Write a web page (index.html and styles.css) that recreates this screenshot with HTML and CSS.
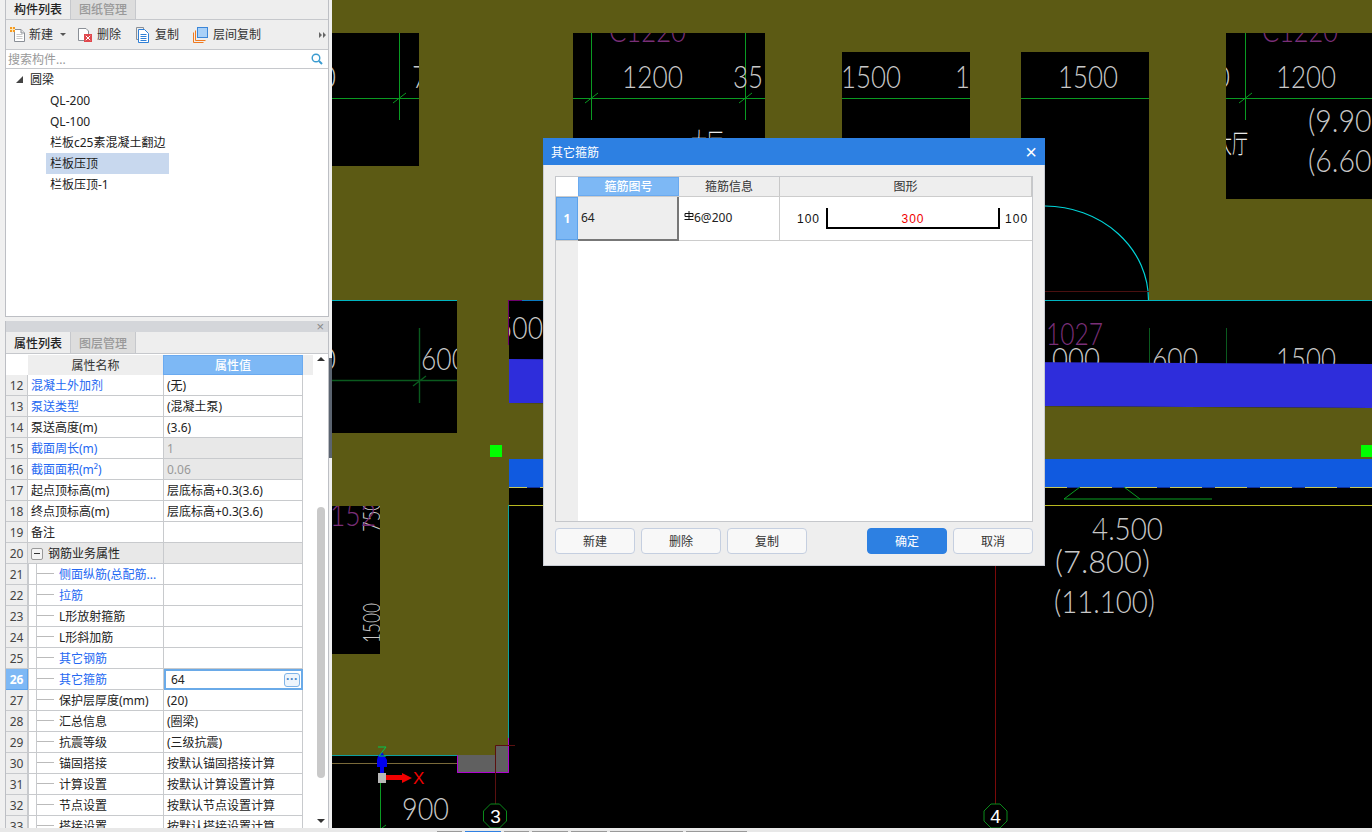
FILE: index.html
```html
<!DOCTYPE html>
<html lang="zh-CN">
<head>
<meta charset="utf-8">
<title>其它箍筋</title>
<link rel="stylesheet" href="styles.css">
</head>
<body>
<div class="app">
  <div class="main">
    <aside class="side">
      <section class="panel panel-top">
        <div class="tabs tabs-top">
          <div class="tab active">构件列表</div>
          <div class="tab">图纸管理</div>
        </div>
        <div class="toolbar">
          <svg class="ic" viewBox="0 0 16 16"><path d="M4.5 2.5H11L14.5 6V14.5H4.5Z" fill="#fff" stroke="#8a8f96"/><path d="M11 2.5V6H14.5" fill="#e6e6e6" stroke="#8a8f96"/><path d="M6.5 7.5H12.5M6.5 9.5H12.5M6.5 11.5H12.5" stroke="#c9c9c9"/><rect x="0" y="0" width="5" height="5" fill="#f59a23"/><path d="M0 2.5H5M2.5 0V5" stroke="#ffe6b0"/></svg>
          <span class="tool-label">新建</span>
          <svg class="caret" viewBox="0 0 6 3"><path d="M0 0H6L3 3Z" fill="#555"/></svg>
          <svg class="ic ic-del" viewBox="0 0 16 16"><path d="M1.5 1.5H9L11.5 4V13.5H1.5Z" fill="#fff" stroke="#8a8f96"/><rect x="7" y="7" width="8" height="8" fill="#e0474c"/><path d="M8.8 8.8L13.2 13.2M13.2 8.8L8.8 13.2" stroke="#fff"/></svg>
          <span class="tool-label">删除</span>
          <svg class="ic ic-copy" viewBox="0 0 16 16"><path d="M1.5 0.5H8.5V2.5" fill="none" stroke="#8a8f96"/><path d="M1.5 .5V12.5H3" fill="none" stroke="#8a8f96"/><path d="M3.5 2.5H9.5L13.5 6.5V15.5H3.5Z" fill="#fff" stroke="#2f7fd6"/><path d="M5.5 7.5H11.5M5.5 9.5H11.5M5.5 11.5H11.5M5.5 13.5H11.5" stroke="#2f7fd6"/></svg>
          <span class="tool-label">复制</span>
          <svg class="ic ic-floor" viewBox="0 0 16 16"><path d="M.5 15.5V5.5M.5 15.5H10.5M2.5 13.5V3.5M2.5 13.5H12.5" fill="none" stroke="#f07a1f"/><rect x="4.5" y=".5" width="10" height="10" fill="#a9d0f7" stroke="#3b86d8"/></svg>
          <span class="tool-label">层间复制</span>
          <svg class="more" viewBox="0 0 8 6"><path d="M0 0L3 3L0 6ZM4 0L7 3L4 6Z" fill="#666"/></svg>
        </div>
        <div class="search">
          <span class="search-text">搜索构件...</span>
          <svg class="search-ic" viewBox="0 0 12 12"><circle cx="5" cy="5" r="3.8" fill="none" stroke="#3a9bd0" stroke-width="1.4"/><path d="M8 8L11 11" stroke="#3a9bd0" stroke-width="2"/></svg>
        </div>
        <div class="tree">
          <div class="tree-root"><svg class="tree-caret" viewBox="0 0 7 7"><path d="M0 7L7 0V7Z" fill="#444"/></svg>圆梁</div>
          <div class="tree-item">QL-200</div>
          <div class="tree-item">QL-100</div>
          <div class="tree-item">栏板c25素混凝土翻边</div>
          <div class="tree-item selected">栏板压顶</div>
          <div class="tree-item">栏板压顶-1</div>
        </div>
      </section>

      <section class="panel panel-bottom">
        <div class="strip"><span class="strip-x">×</span></div>
        <div class="tabs">
          <div class="tab active">属性列表</div>
          <div class="tab">图层管理</div>
        </div>
        <div class="props">
          <div class="sheet">
            <div class="head">
              <div class="head-corner"></div>
              <div class="head-name">属性名称</div>
              <div class="head-val">属性值</div>
              <div class="head-rest"></div>
            </div>
            <div class="row"><div class="num">12</div><div class="name link">混凝土外加剂</div><div class="val">(无)</div></div>
            <div class="row"><div class="num">13</div><div class="name link">泵送类型</div><div class="val">(混凝土泵)</div></div>
            <div class="row"><div class="num">14</div><div class="name">泵送高度(m)</div><div class="val">(3.6)</div></div>
            <div class="row"><div class="num">15</div><div class="name link">截面周长(m)</div><div class="val off">1</div></div>
            <div class="row"><div class="num">16</div><div class="name link">截面面积(m²)</div><div class="val off">0.06</div></div>
            <div class="row"><div class="num">17</div><div class="name">起点顶标高(m)</div><div class="val">层底标高+0.3(3.6)</div></div>
            <div class="row"><div class="num">18</div><div class="name">终点顶标高(m)</div><div class="val">层底标高+0.3(3.6)</div></div>
            <div class="row"><div class="num">19</div><div class="name">备注</div><div class="val"></div></div>
            <div class="row"><div class="num">20</div><div class="name group"><span class="minus"></span>钢筋业务属性</div><div class="val off"></div></div>
            <div class="row"><div class="num">21</div><div class="name child link"><i class="branch"></i>侧面纵筋(总配筋...</div><div class="val"></div></div>
            <div class="row"><div class="num">22</div><div class="name child link"><i class="branch"></i>拉筋</div><div class="val"></div></div>
            <div class="row"><div class="num">23</div><div class="name child"><i class="branch"></i>L形放射箍筋</div><div class="val"></div></div>
            <div class="row"><div class="num">24</div><div class="name child"><i class="branch"></i>L形斜加筋</div><div class="val"></div></div>
            <div class="row"><div class="num">25</div><div class="name child link"><i class="branch"></i>其它钢筋</div><div class="val"></div></div>
            <div class="row"><div class="num current">26</div><div class="name child link"><i class="branch"></i>其它箍筋</div><div class="val editing"><span>64</span><span class="dots">···</span></div></div>
            <div class="row"><div class="num">27</div><div class="name child"><i class="branch"></i>保护层厚度(mm)</div><div class="val">(20)</div></div>
            <div class="row"><div class="num">28</div><div class="name child"><i class="branch"></i>汇总信息</div><div class="val">(圈梁)</div></div>
            <div class="row"><div class="num">29</div><div class="name child"><i class="branch"></i>抗震等级</div><div class="val">(三级抗震)</div></div>
            <div class="row"><div class="num">30</div><div class="name child"><i class="branch"></i>锚固搭接</div><div class="val">按默认锚固搭接计算</div></div>
            <div class="row"><div class="num">31</div><div class="name child"><i class="branch"></i>计算设置</div><div class="val">按默认计算设置计算</div></div>
            <div class="row"><div class="num">32</div><div class="name child"><i class="branch"></i>节点设置</div><div class="val">按默认节点设置计算</div></div>
            <div class="row"><div class="num">33</div><div class="name child"><i class="branch"></i>搭接设置</div><div class="val">按默认搭接设置计算</div></div>
          </div>
          <div class="scroll">
            <svg class="arrow" viewBox="0 0 8 4"><path d="M0 4L4 0L8 4Z" fill="#333"/></svg>
            <div class="thumb"></div>
            <svg class="arrow arrow-down" viewBox="0 0 8 4"><path d="M0 0L4 4L8 0Z" fill="#333"/></svg>
          </div>
        </div>
      </section>
      <div class="splitter"></div>
    </aside>

    <div class="canvas">
      <svg class="cad" viewBox="332 0 1040 828" width="1040" height="828">
        <!-- lines and dimensions under the slabs -->
        <g stroke="#0a9a22" fill="none">
          <path d="M332 98.5H1372"/>
          <path d="M399.5 33V120M591.5 33V120M745.5 33V120M1245.5 33V120"/>
          <path d="M393 103L406 93M585 103L598 93M739 103L752 93M1239 103L1252 93"/>
        </g>
        <g stroke="#0a5a1e" fill="none">
          <path d="M332 380.5H457M419.5 328V403M413 386L426 376" stroke-width="1.4"/>
          <path d="M1149.5 328V364M1226.5 328V364"/>
        </g>
        <g class="dim">
          <text x="320" y="88" textLength="16" lengthAdjust="spacingAndGlyphs">0</text>
          <text x="412" y="88" textLength="16" lengthAdjust="spacingAndGlyphs">7</text>
          <text x="622" y="88" textLength="61" lengthAdjust="spacingAndGlyphs">1200</text>
          <text x="733" y="88" textLength="30" lengthAdjust="spacingAndGlyphs">35</text>
          <text x="841" y="88" textLength="60" lengthAdjust="spacingAndGlyphs">1500</text>
          <text x="955" y="88" textLength="30" lengthAdjust="spacingAndGlyphs">15</text>
          <text x="1058" y="88" textLength="60" lengthAdjust="spacingAndGlyphs">1500</text>
          <text x="1214" y="88" textLength="16" lengthAdjust="spacingAndGlyphs">0</text>
          <text x="1276" y="88" textLength="60" lengthAdjust="spacingAndGlyphs">1200</text>
          <text x="1308" y="132" textLength="80" lengthAdjust="spacingAndGlyphs">(9.900</text>
          <text x="1308" y="172" textLength="80" lengthAdjust="spacingAndGlyphs">(6.600</text>
          <text x="320" y="370" textLength="16" lengthAdjust="spacingAndGlyphs">0</text>
          <text x="421" y="370" textLength="46" lengthAdjust="spacingAndGlyphs">600</text>
          <text x="497" y="339" textLength="46" lengthAdjust="spacingAndGlyphs">500</text>
          <text x="1052" y="370" textLength="48" lengthAdjust="spacingAndGlyphs">000</text>
          <text x="1152" y="370" textLength="46" lengthAdjust="spacingAndGlyphs">600</text>
          <text x="1276" y="370" textLength="60" lengthAdjust="spacingAndGlyphs">1500</text>
          <text x="1092" y="540" textLength="71" lengthAdjust="spacingAndGlyphs">4.500</text>
          <text x="1055" y="573" textLength="95" lengthAdjust="spacingAndGlyphs">(7.800)</text>
          <text x="1054" y="613" textLength="101" lengthAdjust="spacingAndGlyphs">(11.100)</text>
          <text x="402" y="820" textLength="47" lengthAdjust="spacingAndGlyphs">900</text>
          <text class="dim-small" x="380" y="643" textLength="40" lengthAdjust="spacingAndGlyphs" transform="rotate(-90 380 643)">1500</text>
          <text class="dim-small" x="380" y="532" textLength="32" lengthAdjust="spacingAndGlyphs" transform="rotate(-90 380 532)">750</text>
        </g>
        <g class="room">
          <text x="1216" y="153" textLength="32" lengthAdjust="spacingAndGlyphs">大厅</text>
          <text x="691" y="152" textLength="32" lengthAdjust="spacingAndGlyphs">大厅</text>
        </g>
        <g class="mark">
          <text x="609" y="42" textLength="77" lengthAdjust="spacingAndGlyphs">C1220</text>
          <text x="1262" y="42" textLength="76" lengthAdjust="spacingAndGlyphs">C1220</text>
          <text x="1046" y="345" textLength="57" lengthAdjust="spacingAndGlyphs">1027</text>
          <text x="330" y="526" textLength="46" lengthAdjust="spacingAndGlyphs">152</text>
        </g>
        <path d="M1045 206A104 94 0 0 1 1148.5 300" fill="none" stroke="#00d4d8" stroke-width="1.2"/>
        <path d="M1045 291.5H1149" stroke="#4a1010"/>
        <!-- slabs -->
        <path fill="#5c5a14" fill-rule="evenodd" d="M332 0H1372V300H509V745H496V755H332Z M332 33H419V166H332Z M573 33H765V166H573Z M842 52H970V166H842Z M1021 52H1149V300H1021Z M1226 33H1372V199H1226Z M332 301H457V433H332Z M332 506H380V654H332Z"/>
        <path fill="#2e2ddb" d="M509 359L1372 364V408L509 403Z"/>
        <path fill="#5c5a14" d="M509 403L1372 408V459H509Z"/>
        <rect x="509" y="459" width="863" height="28" fill="#105ae0"/>
        <!-- outlines -->
        <path d="M332 300.5H457M1045 300.5H1372" stroke="#00b4c0"/>
        <path d="M522 300.5H543" stroke="#0a78c0"/>
        <path d="M509 300.5H522M508.5 300V345" stroke="#6e006e"/>
        <path d="M509 487.5H1372" stroke="#10309a"/>
        <path d="M509 487.5H1372" stroke="#c8c85a" stroke-dasharray="32 13" stroke-dashoffset="14"/>
        <path d="M1080 487L1064 499H1212M1124 487L1140 499" fill="none" stroke="#0aa022"/>
        <path d="M509 505.5H1372" stroke="#b8b820"/>
        <path d="M508.5 505V745" stroke="#0ea0a0"/>
        <path d="M332 755.5H457" stroke="#0ea0a0"/>
        <path d="M332 763.5H457" stroke="#7a6a3a"/>
        <path d="M457 755H496V745H509V773H457Z" fill="#606060"/>
        <path d="M457.5 755V772.5H508.5V738" fill="none" stroke="#b000d0"/>
        <path d="M515 745.5H495.5V804" fill="none" stroke="#5a1010"/>
        <path d="M995.5 566V828" stroke="#7a0a0a"/>
        <rect x="490" y="445" width="12" height="12" fill="#00ff00"/>
        <rect x="1361" y="445" width="11" height="12" fill="#00ff00"/>
        <!-- axes -->
        <path d="M380.5 783V828M382 828L386 825" stroke="#0a9a22" fill="none"/>
        <path d="M378 756L382 752L387 760V767H384V773H380V767H377V760Z" fill="#0000f0"/>
        <path d="M378 747H386L379 756H386" fill="none" stroke="#00c850"/>
        <rect x="378" y="773" width="8" height="10" fill="#b8b8b8"/>
        <path d="M386 775H402V773L412 778L402 783V780H386Z" fill="#f00000"/>
        <text class="axis" x="413" y="784">X</text>
        <path d="M491 804H500L507 811V821L500 828H491L484 821V811Z" fill="#000" stroke="#0a8a1a" transform="translate(-0.5 0)"/>
        <path d="M991 804H1000L1007 811V821L1000 828H991L984 821V811Z" fill="#000" stroke="#0a8a1a"/>
        <text class="axis-num" x="495.5" y="823">3</text>
        <text class="axis-num" x="995.5" y="823">4</text>
      </svg>
    </div>
  </div>

  <footer class="status">
    <span class="stab w26"></span><span class="stab w36 on"></span><span class="stab w26"></span><span class="stab w36"></span><span class="stab w36"></span><span class="stab w73"></span><span class="stab w61"></span>
  </footer>

  <div class="dialog">
    <div class="dlg-title"><span>其它箍筋</span><span class="dlg-x">×</span></div>
    <div class="dlg-body">
      <div class="grid">
        <div class="grid-head">
          <div class="g-corner"></div>
          <div class="g-h g-c1 selected-h">箍筋图号</div>
          <div class="g-h g-c2">箍筋信息</div>
          <div class="g-h g-c3">图形</div>
        </div>
        <div class="grid-row">
          <div class="g-idx">1</div>
          <div class="g-cell g-c1 g-active">64</div>
          <div class="g-cell g-c2 g-info"><svg class="rebar" viewBox="0 0 10 10"><path d="M1 2.5H9V5.5H1ZM5 0V8M0.5 8.5H9.5" fill="none" stroke="#111"/></svg><span class="rebar-text">6@200</span></div>
          <div class="g-cell g-c3 g-shape">
            <span class="len">100</span>
            <div class="bracket">300</div>
            <span class="len">100</span>
          </div>
        </div>
        <div class="grid-empty"><div class="g-gutter"></div></div>
      </div>
      <div class="actions">
        <button class="btn">新建</button>
        <button class="btn">删除</button>
        <button class="btn">复制</button>
        <span class="spacer"></span>
        <button class="btn primary">确定</button>
        <button class="btn">取消</button>
      </div>
    </div>
  </div>
</div>
</body>
</html>
```
FILE: styles.css
```css
* { box-sizing: border-box; }
html, body { margin: 0; padding: 0; }
body {
  font-family: "Noto Sans", "Noto Sans CJK SC", sans-serif;
  font-size: 12px;
  color: #222;
  background: #000;
}
.app { position: relative; width: 1372px; height: 832px; overflow: hidden; }
.main { display: flex; height: 828px; }

/* left column */
.side { position: relative; width: 332px; flex: none; background: #f0f0f0; padding-left: 5px; }
.panel { width: 324px; border: 1px solid #bdbfc4; background: #fff; }
.panel-top { height: 317px; border-top: 0; }
.panel-bottom { height: 507px; margin-top: 4px; border-top: 0; border-bottom: 0; overflow: hidden; }
.tabs { display: flex; height: 22px; background: #eee; border-bottom: 1px solid #c6c8cc; }
.tabs-top { height: 20px; }
.tab { width: 65px; text-align: center; line-height: 19px; color: #999; background: #ddd; border-right: 1px solid #c6c8cc; font-weight: 500; }
.tabs:not(.tabs-top) .tab { line-height: 23px; }
.tab.active { color: #222; background: #eee; }

.toolbar { display: flex; align-items: center; height: 30px; background: #eee; border-bottom: 1px solid #c6c8cc; padding-left: 4px; color: #333; }
.ic { width: 16px; height: 16px; flex: none; }
.tool-label { margin-left: 3px; line-height: 16px; }
.caret { width: 6px; height: 3px; margin-left: 7px; flex: none; }
.ic-del { margin-left: 11px; margin-right: 1px; }
.ic-copy { margin-left: 14px; margin-right: 1px; }
.ic-floor { margin-left: 14px; margin-right: 1px; }
.more { width: 8px; height: 6px; margin-left: auto; margin-right: 1px; }

.search { display: flex; align-items: center; justify-content: space-between; height: 19px; border-bottom: 1px solid #c6c8cc; padding: 0 5px 0 2px; }
.search-text { color: #999; line-height: 18px; margin-top: 2px; }
.search-ic { width: 12px; height: 12px; }

.tree-root { position: relative; height: 21px; line-height: 22px; padding-left: 24px; }
.tree-caret { width: 7px; height: 7px; position: absolute; left: 10px; top: 7px; }
.tree-item { height: 21px; line-height: 22px; width: 123px; margin-left: 40px; padding-left: 4px; white-space: nowrap; }
.tree-item.selected { background: #c8d8ee; }

.strip { display: flex; justify-content: flex-end; align-items: center; height: 11px; background: #d4d6da; padding-right: 4px; }
.strip-x { color: #888; font-size: 13px; line-height: 11px; font-family: "Liberation Sans", sans-serif; }

.props { display: flex; height: 474px; background: #fff; }
.sheet { width: 297px; flex: none; }
.head { display: flex; height: 21px; padding-top: 1px; width: 307px; }
.head-corner { width: 22px; background: #fff; }
.head-name { width: 135px; background: #eee; text-align: center; line-height: 21px; color: #333; }
.head-val { width: 140px; background: #7db8f5; border: 1px solid #6aaaf0; color: #fff; text-align: center; line-height: 20px; font-weight: 500; }
.head-rest { width: 10px; background: #eee; }

.row { display: grid; grid-template-columns: 22px 136px 139px; height: 21px; }
.row > div { border-bottom: 1px solid #c8cacd; line-height: 22px; white-space: nowrap; overflow: hidden; }
.num { background: #eee; text-align: center; color: #444; border-right: 1px solid #c8cacd; }
.num.current { background: #7db8f5; color: #fff; font-weight: 700; border-color: #5da2ea; }
.name { padding-left: 3px; border-right: 1px solid #c8cacd; }
.link { color: #2468f2; }
.group { display: flex; align-items: center; background: #e8e8e8; color: #222; padding-top: 2px; }
.minus { position: relative; width: 12px; height: 12px; border: 1px solid #999; border-radius: 2px; background: #f4f4f4; margin-right: 5px; flex: none; }
.minus::after { content: ""; position: absolute; left: 2px; right: 2px; top: 4px; height: 1px; background: #333; }
.child { position: relative; padding-left: 30px; border-left: 1px solid #c8cacd; }
.branch { position: absolute; left: 7px; top: -1px; bottom: 0; width: 18px; border-left: 1px solid #c8cacd; }
.branch::after { content: ""; position: absolute; left: 0; right: 0; top: 10px; height: 1px; background: #bbb; }
.val { padding-left: 3px; border-right: 1px solid #c8cacd; }
.val.off { background: #e8e8e8; color: #999; }
.row > .val.editing { display: flex; align-items: center; justify-content: space-between; border: 2px solid #6aaae8; padding: 0 1px 0 5px; background: #fff; line-height: 17px; }
.dots { width: 16px; height: 14px; border: 1px solid #7fb4e8; border-radius: 3px; background: #eef5fc; color: #4a86c8; text-align: center; line-height: 10px; font-size: 12px; font-family: "Liberation Sans", sans-serif; font-weight: 700; }

.scroll { flex: 1; display: flex; flex-direction: column; align-items: flex-start; padding: 3px 0 2px 14px; }
.arrow { width: 8px; height: 4px; flex: none; }
.arrow-down { margin-top: auto; margin-bottom: 3px; }
.thumb { width: 8px; height: 271px; margin-top: 146px; background: #c9c9c9; border-radius: 4px; }

.splitter { position: absolute; left: 329px; top: 358px; width: 3px; height: 100px; background: #5b6470; }

/* drawing */
.canvas { flex: 1; background: #000; overflow: hidden; }
.cad { display: block; }
.dim text { font-family: "Lato", "Liberation Sans", sans-serif; font-weight: 300; font-size: 32px; fill: #c8c8c8; }
.dim .dim-small { font-size: 24px; }
.room text { font-family: "Noto Sans CJK SC", sans-serif; font-weight: 300; font-size: 26px; fill: #e8e8e8; }
.mark text { font-family: "Lato", "Liberation Sans", sans-serif; font-weight: 300; font-size: 32px; fill: #7a2f78; }
.axis { font-family: "Liberation Sans", sans-serif; font-size: 17px; fill: #f00000; }
.axis-num { font-family: "Liberation Sans", sans-serif; font-size: 19px; fill: #fff; text-anchor: middle; }

/* bottom strip */
.status { display: flex; align-items: flex-end; gap: 3px; height: 4px; background: #e8e8e8; padding-left: 437px; }
.stab { height: 1px; background: #999; }
.stab.on { background: #2f80e2; }
.w26 { width: 25px; }
.w36 { width: 36px; }
.w73 { width: 73px; }
.w61 { width: 61px; }

/* dialog */
.dialog { position: absolute; left: 543px; top: 138px; width: 502px; height: 428px; background: #eee; border: 1px solid #c9cdd4; border-top: 0; }
.dlg-title { display: flex; align-items: center; justify-content: space-between; height: 27px; margin: 0 -1px; padding: 0 8px; background: #2d80e2; color: #fff; }
.dlg-x { font-size: 20px; line-height: 20px; font-family: "Liberation Sans", sans-serif; }
.dlg-body { padding: 11px 11px 0; }
.grid { display: flex; flex-direction: column; width: 478px; height: 346px; background: #fff; border: 1px solid #c5c7cb; }
.grid-head { display: flex; height: 20px; border-bottom: 1px solid #ccc; flex: none; }
.g-corner { width: 22px; background: #fff; }
.g-h { line-height: 20px; text-align: center; background: #eee; color: #333; border-right: 1px solid #c8c8c8; }
.g-c1 { width: 101px; }
.g-c2 { width: 101px; }
.g-c3 { flex: 1; }
.selected-h { background: #7db8f5; color: #fff; font-weight: 500; border: 1px solid #6aaaf0; line-height: 18px; }
.grid-row { display: flex; height: 44px; flex: none; border-bottom: 1px solid #ccc; }
.g-idx { width: 22px; background: #7db8f5; border: 1px solid #5da2ea; color: #fff; font-weight: 700; text-align: center; line-height: 42px; }
.g-cell { border-right: 1px solid #ccc; }
.g-active { background: #eee; border-right: 2px solid #777; border-bottom: 2px solid #777; padding-left: 3px; line-height: 42px; margin-bottom: -1px; }
.g-info { display: flex; align-items: center; padding: 0 0 3px 5px; }
.rebar { width: 10px; height: 10px; flex: none; margin-top: -3px; }
.g-shape { display: flex; align-items: flex-start; border-right: 0; padding: 10px 0 0 17px; font-family: "Liberation Sans", sans-serif; letter-spacing: 1px; color: #111; }
.len { line-height: 24px; }
.bracket { width: 174px; height: 21px; margin: 1px 5px 0 6px; border: 2px solid #000; border-top: 0; text-align: center; color: #f00000; line-height: 22px; }
.grid-empty { flex: 1; }
.g-gutter { width: 22px; height: 100%; background: #eee; }
.actions { display: flex; gap: 6px; margin-top: 6px; }
.spacer { width: 48px; }
.btn { width: 80px; height: 26px; padding: 0; font: inherit; color: #333; background: #f8f8f8; border: 1px solid #c5cfe0; border-radius: 4px; }
.btn.primary { background: #2d80e2; border-color: #2d80e2; color: #fff; }
```
